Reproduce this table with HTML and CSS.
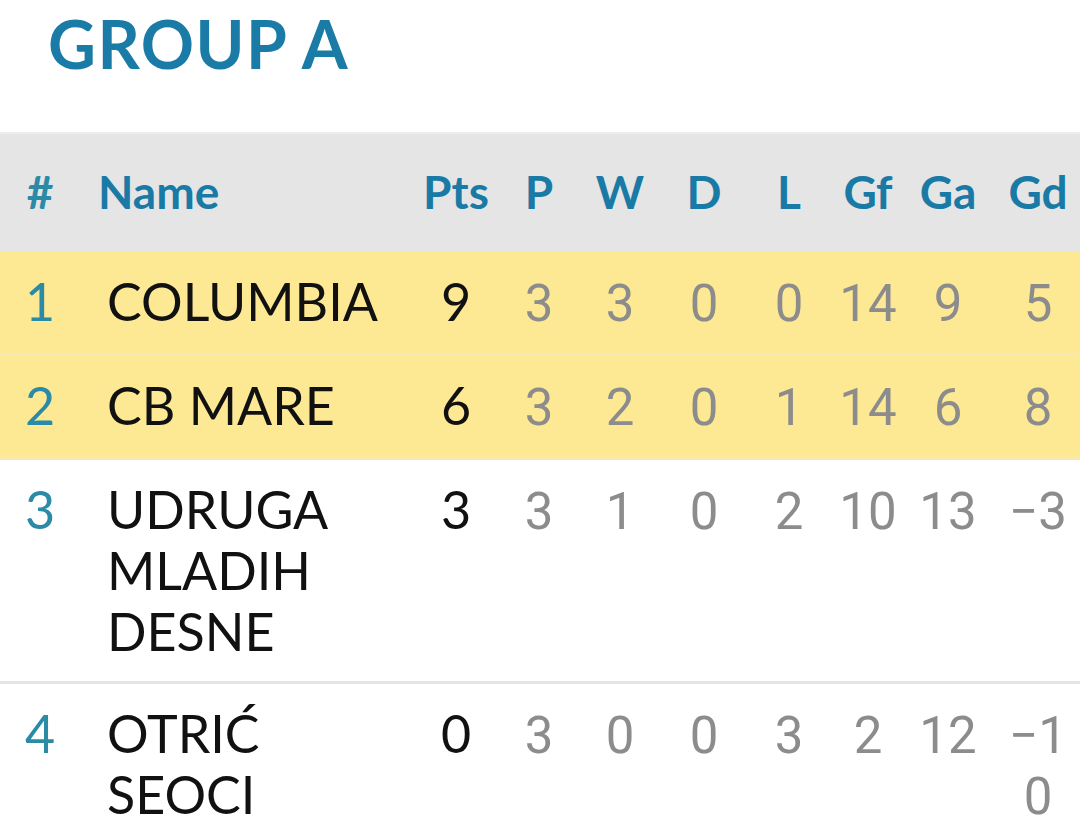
FILE: index.html
```html
<!DOCTYPE html>
<html lang="hr">
<head>
  <meta charset="UTF-8" />
  <meta name="viewport" content="width=device-width, initial-scale=1.0" />
  <title>Group A</title>
  <link rel="stylesheet" href="styles.css">
</head>
<body>
  <h1 class="group-title">GROUP A</h1>

  <div class="standings">
    <div class="st-row st-head">
      <div class="c-pos">#</div>
      <div class="c-name">Name</div>
      <div>Pts</div>
      <div>P</div>
      <div>W</div>
      <div>D</div>
      <div>L</div>
      <div>Gf</div>
      <div>Ga</div>
      <div>Gd</div>
    </div>

    <div class="st-row qualified">
      <div class="c-pos">1</div>
      <div class="c-name">COLUMBIA</div>
      <div class="c-pts">9</div>
      <div class="c-num">3</div>
      <div class="c-num">3</div>
      <div class="c-num">0</div>
      <div class="c-num">0</div>
      <div class="c-num">14</div>
      <div class="c-num">9</div>
      <div class="c-num">5</div>
    </div>

    <div class="st-row qualified">
      <div class="c-pos">2</div>
      <div class="c-name">CB MARE</div>
      <div class="c-pts">6</div>
      <div class="c-num">3</div>
      <div class="c-num">2</div>
      <div class="c-num">0</div>
      <div class="c-num">1</div>
      <div class="c-num">14</div>
      <div class="c-num">6</div>
      <div class="c-num">8</div>
    </div>

    <div class="st-row">
      <div class="c-pos">3</div>
      <div class="c-name">UDRUGA<br>MLADIH<br>DESNE</div>
      <div class="c-pts">3</div>
      <div class="c-num">3</div>
      <div class="c-num">1</div>
      <div class="c-num">0</div>
      <div class="c-num">2</div>
      <div class="c-num">10</div>
      <div class="c-num">13</div>
      <div class="c-num">−3</div>
    </div>

    <div class="st-row">
      <div class="c-pos">4</div>
      <div class="c-name">OTRIĆ<br>SEOCI</div>
      <div class="c-pts">0</div>
      <div class="c-num">3</div>
      <div class="c-num">0</div>
      <div class="c-num">0</div>
      <div class="c-num">3</div>
      <div class="c-num">2</div>
      <div class="c-num">12</div>
      <div class="c-num">−1<br>0</div>
    </div>
  </div>
</body>
</html>
```

FILE: styles.css
```css
body {
  margin: 0;
  background: #ffffff;
  font-family: Lato, "Noto Sans", sans-serif;
  color: #111111;
  overflow: hidden;
}
.group-title {
  margin: 4px 0 48px 48px;
  font-size: 66px;
  line-height: 80px;
  font-weight: 700;
  letter-spacing: 1.5px;
  color: #1a7ca6;
}
.st-row {
  display: grid;
  grid-template-columns: 80px 334px 84px 82px 80px 88px 82px 76px 84px 90px;
  align-items: baseline;
  text-align: center;
  font-size: 52px;
  line-height: 61px;
  padding: 19px 0;
  border-bottom: 3px solid #e4e4e4;
}
.st-row > :last-child {
  padding-left: 6px;
}
.st-head {
  background: #e5e5e5;
  border-top: 2px solid #ededed;
  border-bottom: none;
  padding: 0 0 4px;
  height: 114px;
  align-items: center;
  font-size: 46px;
  font-weight: 700;
  color: #1a7aa6;
}
.st-head .c-name {
  padding-left: 18px;
}
.qualified {
  background: #fde894;
  border-bottom-color: #f5e7b8;
}
.c-pos {
  color: #2b8aa6;
}
.c-name {
  text-align: left;
  padding-left: 27px;
}
.c-pts {
  color: #111111;
}
.c-num {
  font-family: Roboto, "Liberation Sans", sans-serif;
  font-size: 51px;
  color: #8c8c8c;
}
```
